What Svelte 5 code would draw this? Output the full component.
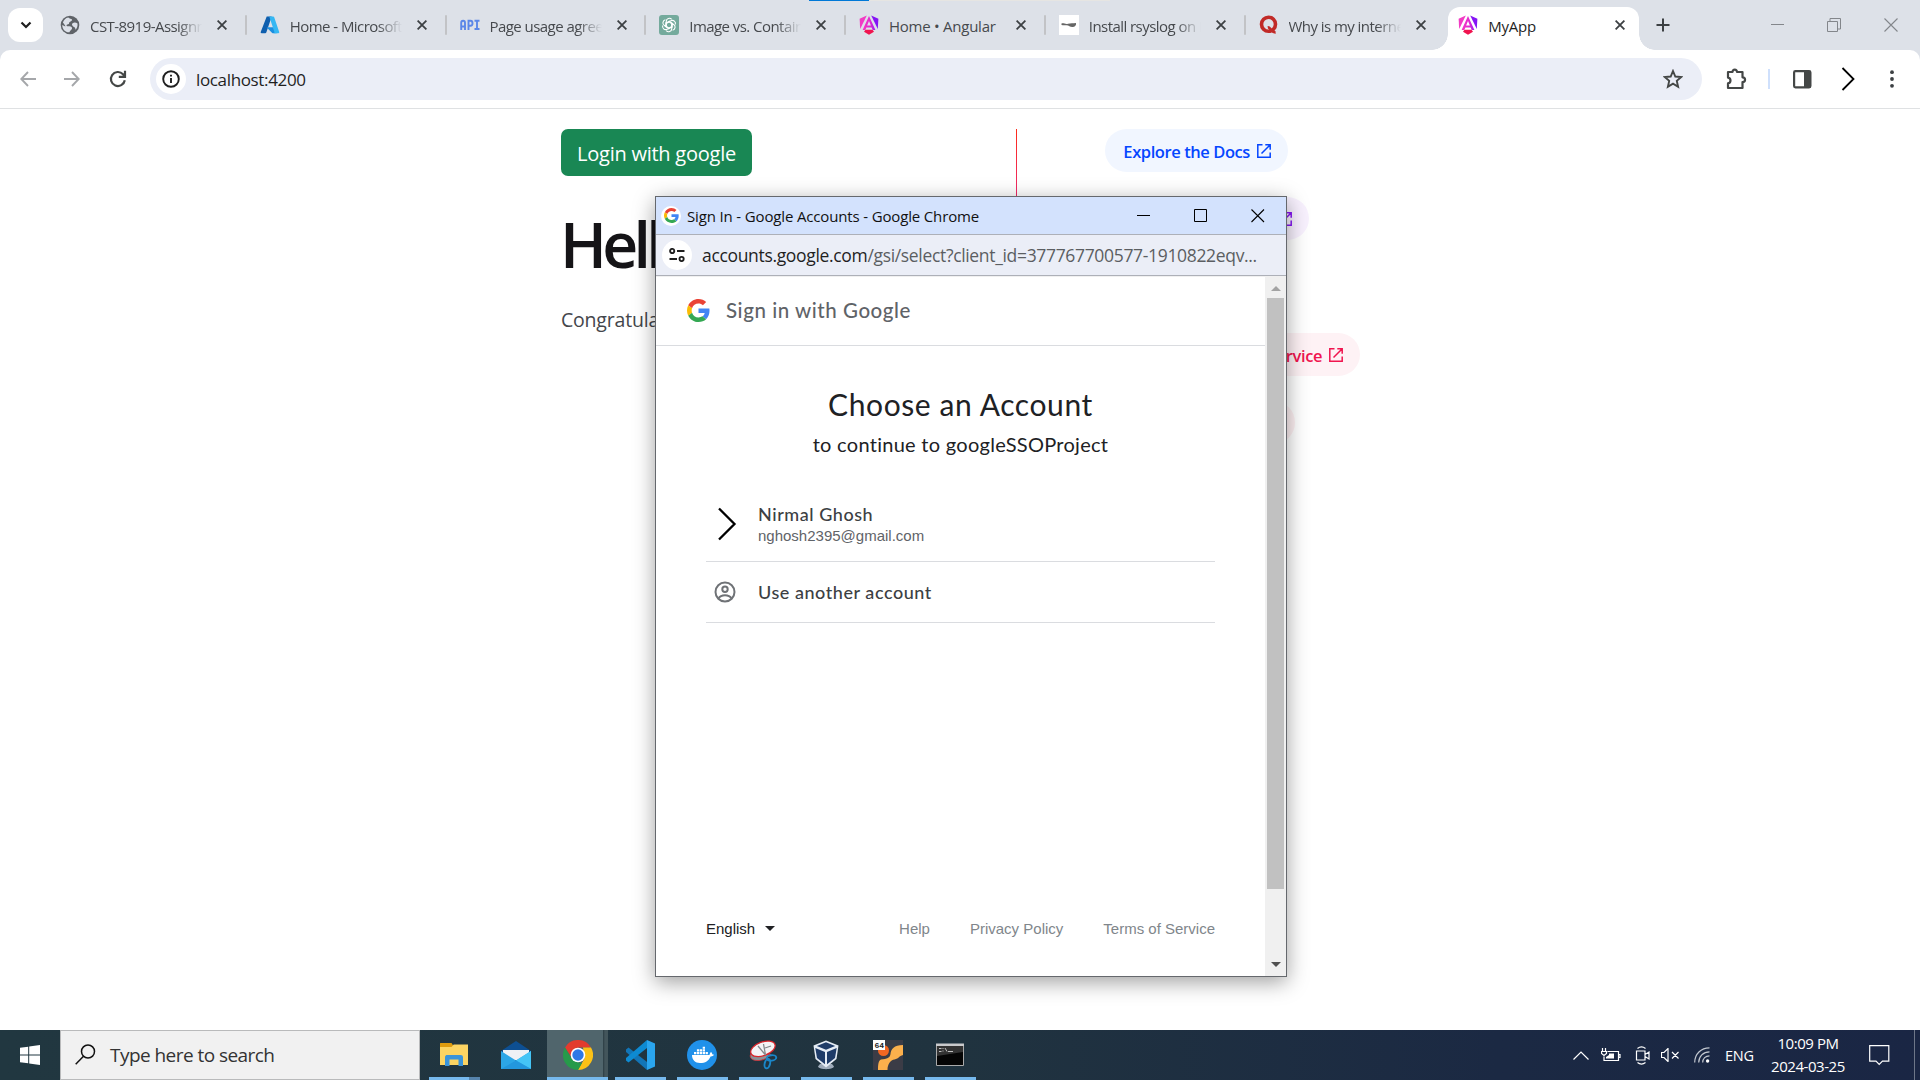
<script>
  const tabs = [
    { icon: 'globe', title: 'CST-8919-Assignment' },
    { icon: 'azure', title: 'Home - Microsoft Azure' },
    { icon: 'api', title: 'Page usage agreement' },
    { icon: 'gpt', title: 'Image vs. Container' },
    { icon: 'angular', title: 'Home • Angular', whole: true },
    { icon: 'thumb', title: 'Install rsyslog on Linux' },
    { icon: 'q', title: 'Why is my internet slow' },
    { icon: 'angular', title: 'MyApp', active: true, whole: true }
  ];
  const pills = [
    { label: 'Explore the Docs', tone: 'blue' },
    { label: 'Learn with Tutorials', tone: 'violet' },
    { label: 'CLI Docs', tone: 'plum' },
    { label: 'Angular Language Service', tone: 'pink' },
    { label: 'Angular DevTools', tone: 'red' }
  ];
  const apps = ['folder', 'mail', 'chrome', 'vscode', 'docker', 'snip', 'vbox', 'putty', 'cmd'];
</script>

{#snippet google(size)}
  <svg width={size} height={size} viewBox="0 0 48 48">
    <path fill="#EA4335" d="M24 9.5c3.54 0 6.71 1.22 9.21 3.6l6.85-6.85C35.9 2.38 30.47 0 24 0 14.62 0 6.51 5.38 2.56 13.22l7.98 6.19C12.43 13.72 17.74 9.5 24 9.5z" />
    <path fill="#4285F4" d="M46.98 24.55c0-1.57-.15-3.09-.38-4.55H24v9.02h12.94c-.58 2.96-2.26 5.48-4.78 7.18l7.73 6c4.51-4.18 7.09-10.36 7.09-17.65z" />
    <path fill="#FBBC05" d="M10.53 28.59c-.48-1.45-.76-2.99-.76-4.59s.27-3.14.76-4.59l-7.98-6.19C.92 16.46 0 20.12 0 24c0 3.88.92 7.54 2.56 10.78l7.97-6.19z" />
    <path fill="#34A853" d="M24 48c6.48 0 11.93-2.13 15.89-5.81l-7.73-6c-2.15 1.45-4.92 2.3-8.16 2.3-6.26 0-11.57-4.22-13.47-9.91l-7.98 6.19C6.51 42.62 14.62 48 24 48z" />
  </svg>
{/snippet}

{#snippet favicon(name)}
  <svg class="favicon" width="20" height="20" viewBox="0 0 20 20">
    {#if name === 'globe'}
      <circle cx="10" cy="10" r="9.3" fill="#5f6368" />
      <path fill="#dde1e9" d="M8.300 2.600c1 .8 1.800 1.200 2.900 1.400 1.200.3 1 1.400.1 2L9.400 7.200c-.6.500 0 1.300-.7 1.900-.8.600-2 .300-2.200 1.300-.1.900 1.300.8 2.900.9 1.800.1 3 1 2.600 2.500-.5 1.300-1.800 1.700-2.600 3.400C5 17.300 2.200 13.900 2.300 9.900l3 1.700c.5-.8-1.600-2.600-2.400-4C3.800 4.900 5.700 3 8.300 2.600z" />
      <path fill="#dde1e9" d="M12.600 8.200c1.500-1 3.500-.7 4.900.3.300 2.400-.4 4.700-2 6.300-.1-1.200-.3-2.400-1.400-2.900-1.600-.7-2.900-2.500-1.500-3.700z" />
    {:else if name === 'azure'}
      <path fill="#0f5fae" d="M6.700 1.500h5L6.400 17.300c-.2.600-.6.900-1.200.9H1.600c-.8 0-1.100-.6-.9-1.200z" />
      <path fill="#1b8fe0" d="M13.200 12.200H6.500l5.200 5.400c.3.300.6.600 1.100.6h4z" />
      <path fill="#35b7f3" d="M8.700 1.500h4.500c.5 0 .8.300 1 .8l5 14.700c.2.700-.2 1.200-.8 1.200h-4.600c.5 0 .8-.5.600-1.200L9.500 2.300c-.1-.4-.4-.7-.8-.8z" />
    {:else if name === 'api'}
      <g fill="none" stroke="#5b87e8" stroke-width="1.900"><path d="M1.200 15V8c0-3 3.800-3 3.800 0v7M1.200 11.500H5M8.500 15V5.800h2c2.700 0 2.700 4.900 0 4.900h-2M14.500 5.800H19.500M17 5.800V14M14.500 14H19.500" /></g>
    {:else if name === 'gpt'}
      <rect width="20" height="20" rx="3" fill="#74aa9c" />
      <g fill="none" stroke="#fff" stroke-width="1.100">
        {#each [0, 60, 120, 180, 240, 300] as a}
          <path d="M7.300 10.800V6.200c0-2.800 3.600-4 5.400-1.900M7.300 8.300l3-1.700 3.700 2.100" transform="rotate({a} 10 10)" />
        {/each}
      </g>
    {:else if name === 'angular'}
      <linearGradient id="ng" x1="0" x2="1"><stop stop-color="#f637c3" /><stop offset=".6" stop-color="#e02bd0" /><stop offset="1" stop-color="#9c1df0" /></linearGradient>
      <path fill="#f23bc4" d="M7.800.500.600 3.800l.6 10.200z" />
      <path fill="#8514f5" d="m12.200.500 7.200 3.300-.6 10.200z" />
      <path fill="url(#ng)" d="M10 1 3.600 15h2.700l1.100-2.600h5.200l1.100 2.600h2.700zm0 5 1.900 4.400H8.100z" />
      <path fill="#f0144f" d="M6.500 14.800h7l1.500 1.900-5 3-5-3z" />
    {:else if name === 'thumb'}
      <rect width="20" height="20" fill="#fff" />
      <path fill="#666" d="M2.500 8.500c2-.8 4 1 6.500.2 2.500-.8 5-.4 8-.8.500 2-1 4-3.500 4.200-2.500.1-3.500-1.600-6-1.800-2 0-3.500.2-5-.4z" />
    {:else}
      <circle cx="9.500" cy="9.300" r="7" fill="none" stroke="#c12a27" stroke-width="3.600" />
      <path fill="none" stroke="#c12a27" stroke-width="2.800" d="M8.800 12.500c2.500-.5 3.400 5.200 7.800 4.800" />
    {/if}
  </svg>
{/snippet}

{#snippet cross(size)}
  <svg width={size} height={size} viewBox="0 0 10 10"><path d="M.6.600l8.800 8.800M9.400.600.600 9.400" fill="none" stroke="currentColor" stroke-width="1.800" /></svg>
{/snippet}

<div class="screen">
  <div class="topline"><i></i></div>

  <header class="strip">
    <div class="search-tabs">
      <svg width="12" height="8" viewBox="0 0 12 8"><path d="M1.500 1.500 6 6l4.500-4.500" fill="none" stroke="#1f1f1f" stroke-width="2.200" /></svg>
    </div>
    <div class="tabs">
      {#each tabs as tab, i}
        <div class="tab" class:active={tab.active} class:divided={i < 6}>
          {@render favicon(tab.icon)}
          <span class="tab-title" class:whole={tab.whole}>{tab.title}</span>
          <span class="tab-close">{@render cross(10)}</span>
        </div>
      {/each}
    </div>
    <svg class="new-tab" width="14" height="14" viewBox="0 0 14 14"><path d="M7 .5v13M.5 7h13" fill="none" stroke="#3c4043" stroke-width="2" /></svg>
    <div class="window-buttons">
      <svg width="14" height="14" viewBox="0 0 14 14"><path d="M0 6.500h13" stroke="#83868b" /></svg>
      <svg width="14" height="14" viewBox="0 0 14 14"><path d="M.5 3.500h10v10h-10zM3 3.500v-3h10.500v10.500h-3" fill="none" stroke="#83868b" /></svg>
      <svg width="14" height="14" viewBox="0 0 14 14"><path d="m.5.500 13 13M13.500.500l-13 13" stroke="#83868b" stroke-width="1.100" /></svg>
    </div>
  </header>

  <div class="toolbar">
    <div class="nav">
      <svg width="16" height="16" viewBox="0 0 16 16" fill="none" stroke="#a5a7aa" stroke-width="1.900"><path d="M16 8H1.500M8 1 1.300 8 8 15" /></svg>
      <svg width="16" height="16" viewBox="0 0 16 16" fill="none" stroke="#a5a7aa" stroke-width="1.900"><path d="M0 8h14.500M8 1l6.700 7L8 15" /></svg>
      <svg width="18" height="18" viewBox="0 0 18 18" fill="none" stroke="#444746" stroke-width="2.200"><path d="M15.800 10.200A7 7 0 1 1 14 4.200L15.500 6M16 .8v6H9.800" /></svg>
    </div>
    <div class="omnibox">
      <span class="disc"><svg width="18" height="18" viewBox="0 0 18 18"><circle cx="9" cy="9" r="7.800" fill="none" stroke="#1f1f1f" stroke-width="1.900" /><path d="M9 8v5M9 4.700v1.900" stroke="#1f1f1f" stroke-width="1.900" /></svg></span>
      <span class="address">localhost:4200</span>
      <svg class="star" width="20" height="20" viewBox="0 0 20 20"><path d="m10 2 2.300 5.500 6 .5-4.500 3.900 1.300 5.800-5.100-3.100-5.100 3.100 1.300-5.800L1.700 8l6-.5z" fill="none" stroke="#444746" stroke-width="1.900" /></svg>
    </div>
    <div class="tools">
      <svg width="22" height="22" viewBox="0 0 22 22"><path d="M3 4h4.500c.2-3.300 4.300-3.300 4.500 0H17.500v5.300c3.400.2 3.400 4.500 0 4.700V20H3v-4.600c3.300-.6 3.300-5.200 0-5.800z" fill="none" stroke="#444746" stroke-width="2.200" stroke-linejoin="round" /></svg>
      <i></i>
      <svg width="19" height="19" viewBox="0 0 19 19"><rect x="1.100" y="1.100" width="16.300" height="16.300" rx="1.300" fill="none" stroke="#444746" stroke-width="2.200" /><path d="M11 1h6.500v17H11z" fill="#444746" /></svg>
      <svg width="14" height="24" viewBox="0 0 14 24"><path d="m1.500 1 11 11-11 11" fill="none" stroke="#000" stroke-width="1.800" /></svg>
      <svg width="4" height="18" viewBox="0 0 4 18" fill="#3c4043"><circle cx="2" cy="2.200" r="1.900" /><circle cx="2" cy="9" r="1.900" /><circle cx="2" cy="15.800" r="1.900" /></svg>
    </div>
  </div>

  <main class="page">
    <section class="intro">
      <button>Login with google</button>
      <h1>Hello, my-app</h1>
      <p>Congratulations! Your app is running.</p>
    </section>
    <div class="rule"></div>
    <section class="links">
      {#each pills as pill}
        <a class="pill {pill.tone}" href="#top">
          <span>{pill.label}</span>
          <svg width="14" height="14" viewBox="0 0 14 14"><path d="M5.500.800H.8v12.400h12.400V8.500M8.300.800h4.900v4.900M13 1 4.500 9.500" fill="none" stroke="currentColor" stroke-width="1.500" /></svg>
        </a>
      {/each}
    </section>
  </main>

  <div class="popup">
    <div class="popup-title">
      <span class="disc small">{@render google(15)}</span>
      <span class="popup-name">Sign In - Google Accounts - Google Chrome</span>
      <div class="popup-buttons">
        <svg width="14" height="14" viewBox="0 0 14 14"><path d="M0 6.500h13" stroke="#000" /></svg>
        <svg width="14" height="14" viewBox="0 0 14 14"><path d="M.5.500h12v12H.5z" fill="none" stroke="#000" /></svg>
        <svg width="14" height="14" viewBox="0 0 14 14"><path d="m.5.500 12.500 12.500M13 .5.500 13" stroke="#000" stroke-width="1.100" /></svg>
      </div>
    </div>
    <div class="popup-url">
      <span class="disc"><svg width="16" height="14" viewBox="0 0 16 14" fill="none" stroke="#1f1f1f" stroke-width="1.900"><circle cx="3.200" cy="3" r="2.100" /><path d="M8 3h7.500M.5 11H8" /><circle cx="12.600" cy="11" r="2.100" /></svg></span>
      <span class="url-text">accounts.google.com<em>/gsi/select?client_id=377767700577-1910822eqv...</em></span>
    </div>
    <div class="popup-view">
      <div class="signin">
        <div class="brand">{@render google(23)}<span>Sign in with Google</span></div>
        <h2>Choose an Account</h2>
        <div class="subtitle">to continue to googleSSOProject</div>
        <ul>
          <li class="account">
            <svg width="20" height="34" viewBox="0 0 20 34"><path d="m2 1.500 15.500 15.500L2 32.500" fill="none" stroke="#000" stroke-width="2.300" /></svg>
            <div><strong>Nirmal Ghosh</strong><small>nghosh2395@gmail.com</small></div>
          </li>
          <li class="other">
            <svg width="22" height="22" viewBox="0 0 22 22" fill="none" stroke="#6f7276" stroke-width="2"><circle cx="11" cy="11" r="9.500" /><circle cx="11" cy="8.300" r="2.700" /><path d="M4.500 17.500c2.500-4.200 10.500-4.200 13 0" /></svg>
            <strong>Use another account</strong>
          </li>
        </ul>
        <footer>
          <span class="lang">English</span>
          <svg width="10" height="5" viewBox="0 0 10 5"><path d="M0 0h10L5 5z" fill="#202124" /></svg>
          <nav><span>Help</span><span>Privacy Policy</span><span>Terms of Service</span></nav>
        </footer>
      </div>
      <div class="scrollbar">
        <svg width="10" height="5" viewBox="0 0 10 5"><path d="M5 0l5 5H0z" fill="#a3a3a3" /></svg>
        <i></i>
        <svg width="10" height="5" viewBox="0 0 10 5"><path d="M0 0h10L5 5z" fill="#505050" /></svg>
      </div>
    </div>
  </div>

  <div class="taskbar">
    <div class="start">
      <svg width="20" height="20" viewBox="0 0 20 20" fill="#fff"><path d="M0 2.800 8.200 1.700V9.500H0zM9.200 1.500 20 0v9.500H9.200zM0 10.500h8.200v7.800L0 17.200zM9.200 10.500H20V20L9.200 18.500z" /></svg>
    </div>
    <div class="find">
      <svg width="21" height="21" viewBox="0 0 21 21"><circle cx="13" cy="7.500" r="6.500" fill="none" stroke="#111" stroke-width="1.500" /><path d="M8.500 12.300.7 20.200" stroke="#111" stroke-width="1.500" /></svg>
      <span>Type here to search</span>
    </div>
    <div class="apps">
      {#each apps as app}
        <div class="app {app}">
          <svg width="30" height="30" viewBox="0 0 30 30">
            {#if app === 'folder'}
              <path fill="#de9b0e" d="M1 3.500C1 3 1.500 3 2 3h10.500l2 3-2 2H1z" />
              <path fill="#fcd462" d="M1 7h11.500l2.200-2.500H29V25H1z" />
              <path fill="#3a94da" d="M6 26v-8.500C6 15.500 7 15 8.500 15h13c1.800 0 2.500.8 2.500 2.500V26h-4.500v-6.500h-9V26z" />
            {:else if app === 'mail'}
              <path fill="#0d4f92" d="M0 11 15 1l15 10v4H0z" />
              <path fill="#eef1f5" d="M2 10h26v10H2z" />
              <path fill="#2ca6e6" d="M0 11v18h30V11L15 20.500z" />
              <path fill="#45c5f6" d="M30 11v18L15 20.500z" /><path fill="#2397dd" d="M0 29h30L15 20.500z" />
            {:else if app === 'chrome'}
              <path fill="#e33b2e" d="M2 7.500A15 15 0 0 1 28 7.500H15L9 18z" />
              <path fill="#fbc116" d="M28 7.500A15 15 0 0 1 15 30l6.500-11.500L20 7.500z" />
              <path fill="#269a4a" d="M2 7.500l6.500 11 6.500 4 4 .5-4 7A15 15 0 0 1 2 7.500z" />
              <circle cx="15" cy="15" r="7.300" fill="#fff" /><circle cx="15" cy="15" r="5.700" fill="#2e78e6" />
            {:else if app === 'vscode'}
              <path fill="#1275b7" d="M1 9.500 3.500 7.500 22 22V30L1 12z" />
              <path fill="#0d8ad2" d="M1 20.500 3.500 22.500 22 8V0L1 18z" />
              <path fill="#2aa5ee" d="m22 0 8 3.500v23L22 30z" />
            {:else if app === 'docker'}
              <circle cx="15" cy="15" r="15" fill="#2091ea" />
              <path fill="#fff" d="M5 15h17.500c.2-1.500.8-2.500 1.500-3 .8.500 1.300 1.300 1.200 2.200.8 0 1.500.2 1.800.6-.8 1.300-2 1.700-3.400 1.600C21.500 21 18.500 23 13 23c-5 0-8-3.500-8-8z" />
              <g fill="#fff"><path d="M7 12h2.300v2.300H7zM9.900 12h2.300v2.300H9.900zM12.800 12h2.300v2.300h-2.300zM15.700 12H18v2.300h-2.300zM18.600 12h2.300v2.300h-2.300zM9.900 9.300h2.300v2.200H9.900zM12.800 9.300h2.300v2.200h-2.300zM15.700 9.300H18v2.200h-2.300zM15.700 6.700H18v2h-2.300z" /></g>
            {:else if app === 'snip'}
              <path fill="#8b9196" stroke="#d8343a" stroke-width=".8" d="M1.500 14.500c-1 3 1 6.500 8.500 6 4-.3 8-2 12-6z" />
              <ellipse cx="14" cy="8.800" rx="12.800" ry="6.800" fill="#f4f4f6" stroke="#d9262c" stroke-width="1.300" transform="rotate(-20 14 9)" />
              <path d="M9 6l7.500 9M14.500 4l2 11M16 8l6-2" stroke="#85888c" stroke-width="1.300" fill="none" />
              <g fill="none" stroke="#1a86c8" stroke-width="1.900"><ellipse cx="22.500" cy="18" rx="4.800" ry="2.700" transform="rotate(-8 22 18)" /><ellipse cx="18.500" cy="23.500" rx="2.700" ry="4.800" transform="rotate(14 18 23)" /></g>
            {:else if app === 'vbox'}
              <path fill="#9eabba" d="M9 24h12l2 2.500c-1 3.500-15 3.500-16 0z" />
              <path fill="#e6edf5" d="M2.500 5.500 15 .500l12.500 5L25.500 19 15 27.500 4.500 19z" />
              <path fill="#1f3c68" d="m5.800 6 9.200-3.700L24.200 6 15 9.800zM4.300 8l9.700 4v12.300L6 18zM25.700 8 16 12v12.300L24 18z" />
            {:else if app === 'putty'}
              <path fill="#3b3c46" d="M0 0h30v30H0z" />
              <circle cx="10.500" cy="10.500" r="5.500" fill="#f26722" />
              <path fill="#fcb04c" d="M30 5c-9 0-12 4-12.500 9-.5 4-3.500 5-9.500 5.500C5.500 20 5 25 5 30h9.500c0-6 3-10 7-10.500C26 18.500 26 16 30 15z" />
              <path fill="#fff" d="M0 0h12v10H0z" />
              <text x="1.400" y="8.200">64</text>
            {:else}
              <path fill="#050505" stroke="#aaa" d="M1.500 4.500h27v21h-27z" /><path fill="#c9cacc" d="M1 3.500h28V6H1z" /><path fill="#333" d="M2 6h26v6L2 16z" />
              <path d="M4 8.500h2.500M4 11.500h2.500M8 8v1M8 10.500v1M10 8l2 3.500M13 11.500h5" stroke="#c0c0c0" />
            {/if}
          </svg>
        </div>
      {/each}
    </div>
    <div class="tray">
      <svg width="16" height="9" viewBox="0 0 16 9"><path d="m.5 8.500 7.500-7.500 7.500 7.500" /></svg>
      <svg width="20" height="14" viewBox="0 0 20 14"><path d="M6.500 3.500h11v9H3v-4M17.500 6.500H19v3h-1.500M1.500 0v3M4.500 0v3M.5 3.500h5v2L3 7.500.5 5.500z" /><path d="M8 5.500h5v5H5V9l3-2z" fill="#fff" stroke="none" /></svg>
      <svg width="15" height="19" viewBox="0 0 15 19"><path d="M1.500 5h8.500v9H1.500zM10 8.500l4-2.500v7l-4-2.500M2.500 2.500C5 .5 8 .5 10.500 2.500M2.500 16.500c2.500 2 5.500 2 8 0" /></svg>
      <svg width="19" height="14" viewBox="0 0 19 14"><path d="M.5 4.500H3l4-4v13l-4-4H.500zM11 4l6.500 6.500M17.500 4 11 10.500" /></svg>
      <svg width="16" height="16" viewBox="0 0 16 16"><path d="M.7 15.500C.7 7 7 .8 15.500.8M4.700 15.500c0-6.200 4.600-10.700 10.800-10.700M8.700 15.500c0-4 2.800-6.700 6.800-6.700" stroke="#c3c8d0" /><circle cx="13.600" cy="14" r="1.700" fill="#fff" stroke="none" /></svg>
      <span class="eng">ENG</span>
      <div class="clock"><span>10:09 PM</span><span>2024-03-25</span></div>
      <svg class="note" width="21" height="21" viewBox="0 0 21 21"><path d="M.7.700h19.100v15.500h-6.300L10.200 19.500 7 16.200H.7z" /></svg>
      <i></i>
    </div>
  </div>
</div>

<style>
  :global(body) { margin: 0; overflow: hidden; background: #fff; }
  .screen {
    position: relative; width: 1920px; height: 1080px; overflow: hidden;
    display: flex; flex-direction: column; background: #fff;
    font-family: "Open Sans", "Noto Sans", sans-serif; color: #1f1f1f; white-space: nowrap;
  }
  svg { display: block; flex: none; }

  .topline { position: absolute; z-index: 2; left: 809px; top: 0; width: 301px; height: 1px; background: #e6e5e2; }
  .topline i { display: block; width: 60px; height: 1px; background: #0078d7; }

  .strip { height: 50px; flex: none; display: flex; align-items: center; background: #dde1e8; }
  .search-tabs { width: 35px; height: 34px; margin-left: 8px; border-radius: 12px; background: #fff; display: flex; align-items: center; justify-content: center; }
  .tabs { display: flex; align-self: stretch; margin-left: 3px; }
  .tab { position: relative; width: 199.75px; box-sizing: border-box; display: flex; align-items: center; padding: 0 0 0 14px; color: #46494d; }
  .tab.divided::after { content: ""; position: absolute; right: -1px; top: 15px; width: 2px; height: 20px; background: #c2c3c6; border-radius: 1px; }
  .tab-title { width: 112px; margin-left: 10px; padding-top: 2px; overflow: hidden; font-size: 15px; letter-spacing: -0.550px; line-height: 22px; mask-image: linear-gradient(90deg, #000 78%, transparent); }
  .tab-title.whole { mask-image: none; letter-spacing: -0.250px; }
  .tab-close { margin-left: 15px; color: #3c4043; }
  .tab.active { color: #1f1f1f; }
  .tab.active::before { content: ""; position: absolute; left: 4px; width: 191px; top: 7px; bottom: 0; border-radius: 12px 12px 0 0; background: #fff; }
  .tab.active::after {
    content: ""; position: absolute; left: -12px; width: 223px; bottom: 0; height: 16px;
    background:
      radial-gradient(circle at 0 0, transparent 15.500px, #fff 16px) left / 16px 16px no-repeat,
      radial-gradient(circle at 100% 0, transparent 15.500px, #fff 16px) right / 16px 16px no-repeat;
  }
  .tab.active > :global(*) { position: relative; z-index: 1; }
  .new-tab { margin-left: 12px; }
  .window-buttons { display: flex; gap: 42px; margin-left: auto; margin-right: 22px; }
  .window-buttons svg:last-child { margin-left: 1px; }

  .toolbar { height: 58px; flex: none; display: flex; align-items: center; position: relative; background: linear-gradient(#dde1e8, #dde1e8); border-bottom: 1px solid #dfe1e3; }
  .toolbar::before { content: ""; position: absolute; inset: 0; background: #fff; border-radius: 10px 10px 0 0; }
  .toolbar > * { position: relative; }
  .nav { display: flex; align-items: center; gap: 28px; padding-left: 20px; width: 130px; box-sizing: border-box; }
  .nav svg:last-child { margin-left: 1px; }
  .omnibox { width: 1552px; height: 42px; margin-left: 20px; border-radius: 21px; background: #ebeef7; box-sizing: border-box; padding: 0 19px 0 6px; display: flex; align-items: center; }
  .disc { width: 30px; height: 30px; flex: none; border-radius: 50%; background: #fff; display: flex; align-items: center; justify-content: center; }
  .disc.small { width: 20px; height: 20px; }
  .address { margin-left: 10px; font-size: 17px; letter-spacing: -0.350px; }
  .star { margin-left: auto; }
  .tools { flex: 1; display: flex; align-items: center; padding-left: 23px; }
  .tools i { width: 1.500px; height: 20px; margin: 0 23px 0 21px; background: #cfe0fc; }
  .tools svg:nth-of-type(3) { margin-left: 29px; }
  .tools svg:nth-of-type(4) { margin-left: 35px; }

  .page { flex: 1; display: flex; align-items: flex-start; padding: 20px 0 0 561px; background: #fff; }
  .intro { width: 455px; overflow: hidden; }
  button { display: block; width: 191px; height: 47px; padding: 2px 0 0; border: 0; border-radius: 7px; background: #198754; color: #fff; font: 20px "Open Sans", sans-serif; letter-spacing: -0.240px; }
  h1 { margin: 25px 0 0 -1px; font-size: 62.500px; font-weight: 600; line-height: 86px; letter-spacing: -4.700px; color: #151417; }
  p { margin: 18px 0 0; font-size: 19.500px; line-height: 30px; letter-spacing: -0.200px; color: #44464b; }
  .rule { width: 1px; height: 316px; background: linear-gradient(#fe2c1a, #ef2a64 60px, #c92bb7 160px, #8514f5); }
  .links { width: 359px; display: flex; flex-direction: column; align-items: center; gap: 25px; }
  .pill { height: 43px; box-sizing: border-box; border-radius: 22px; display: flex; align-items: center; justify-content: flex-end; padding-right: 17px; gap: 7px; font-size: 16.500px; font-weight: 600; letter-spacing: -0.420px; text-decoration: none; }
  .pill span { padding-top: 1px; }
  .blue { width: 183px; background: #f1f6ff; color: #0546ff; }
  .violet { width: 225px; background: #f8f1fe; color: #8514f5; }
  .plum { width: 130px; background: #fbf0fc; color: #b613c9; }
  .pink { width: 327px; background: #fef2f5; color: #f0154f; }
  .red { width: 196px; background: #fef1f3; color: #fa2c04; }

  .popup { position: absolute; left: 655px; top: 196px; width: 632px; height: 781px; box-sizing: border-box; border: 1px solid #65686d; background: #fff; display: flex; flex-direction: column; box-shadow: 0 5px 20px rgba(0, 0, 0, 0.38); }
  .popup-title { height: 38px; box-sizing: border-box; flex: none; display: flex; align-items: center; padding: 0 21.500px 0 5px; background: #d3e2fd; border-bottom: 1px solid #adb0b8; }
  .popup-name { margin-left: 6px; font-size: 15px; letter-spacing: -0.150px; color: #111; }
  .popup-buttons { display: flex; gap: 43px; margin-left: auto; }
  .popup-url { height: 41px; box-sizing: border-box; flex: none; display: flex; align-items: center; padding-left: 6px; background: #ebeef7; border-bottom: 1px solid #adb0b8; }
  .url-text { margin-left: 10px; font-size: 17.500px; letter-spacing: -0.330px; }
  .url-text em { font-style: normal; color: #5b5e62; }
  .popup-view { flex: 1; display: flex; border-top: 1px solid #f0f0f0; min-height: 0; }
  .signin { flex: 1; display: flex; flex-direction: column; font-family: Lato, sans-serif; color: #202124; }
  .brand { height: 69px; box-sizing: border-box; border-bottom: 1px solid #dadce0; display: flex; align-items: center; gap: 16px; padding: 0 0 2px 31px; font-size: 20.500px; font-weight: 500; color: #5f6368; letter-spacing: 0.550px; }
  h2 { margin: 38px 0 0; text-align: center; font-size: 30px; font-weight: 400; line-height: 40px; letter-spacing: 0.600px; }
  .subtitle { text-align: center; font-size: 20px; line-height: 30px; margin-top: 5px; letter-spacing: 0.280px; }
  ul { list-style: none; margin: 28px 50px 0; padding: 0; }
  li { display: flex; align-items: center; border-bottom: 1px solid #dadce0; box-sizing: border-box; }
  .account { height: 75px; padding-left: 11px; gap: 21px; }
  .account div { display: flex; flex-direction: column; }
  strong { font-size: 18px; font-weight: 500; line-height: 22px; letter-spacing: 0.550px; color: #3c4043; }
  small { font: 15px/20px "Liberation Sans", sans-serif; color: #5f6368; padding-top: 1px; }
  .other { height: 61px; padding-left: 8px; gap: 22px; }
  footer { margin: auto 50px 37px; display: flex; align-items: center; font: 15px/20px "Liberation Sans", sans-serif; }
  .lang { margin-right: 10px; }
  footer svg { margin-top: -2px; }
  nav { margin-left: auto; display: flex; gap: 40px; color: #80868b; }
  .scrollbar { width: 21px; background: #f0f0f0; display: flex; flex-direction: column; align-items: center; padding: 9px 0; box-sizing: border-box; }
  .scrollbar i { width: 17px; height: 591px; margin: 7px 0 auto; background: #c1c1c1; }

  .taskbar { height: 50px; flex: none; display: flex; color: #fff; background: linear-gradient(90deg, #213740, #20333f 50%, #1b2943 78%, #1a2644); }
  .start { width: 60px; display: flex; align-items: center; justify-content: center; }
  .find { width: 360px; box-sizing: border-box; display: flex; align-items: center; padding-left: 14px; gap: 14px; background: #f1f1f1; border: 1px solid #b9babb; color: #333; font-size: 19px; letter-spacing: -0.550px; }
  .find svg { margin-top: -1px; }
  .apps { display: flex; margin-left: 3px; }
  .app { width: 62px; box-sizing: border-box; padding-top: 10px; display: flex; flex-direction: column; align-items: center; }
  .app::after { content: ""; width: 51px; height: 3px; margin-top: 7px; background: #76b9ed; }
  .folder::after { width: 51px; background: linear-gradient(90deg, #76b9ed 40px, #5684ac 40px); }
  .mail::after { background: none; }
  .chrome { background: linear-gradient(90deg, #50656c 56px, #2b3c43 56px, #43555b 58px); width: 61px; margin-right: 1px; }
  .chrome::after { width: 61px; }
  .app text { font: 700 8px "Liberation Mono", monospace; fill: #222; }
  .tray { margin-left: auto; display: flex; align-items: center; }
  .tray svg { fill: none; stroke: #fff; stroke-width: 1.200; margin-right: 14px; }
  .tray svg:nth-of-type(1) { margin-right: 12px; }
  .tray svg:nth-of-type(3) { margin-right: 11px; }
  .eng { font-size: 14.500px; letter-spacing: -0.200px; margin-left: 1px; width: 43px; }
  .clock { width: 80px; display: flex; flex-direction: column; align-items: center; font-size: 15px; line-height: 23px; letter-spacing: -0.450px; }
  .tray .note { margin: 0 0 0 21px; }
  .tray i { width: 1px; height: 50px; margin: 0 5px 0 24px; background: #6d7688; }
</style>
